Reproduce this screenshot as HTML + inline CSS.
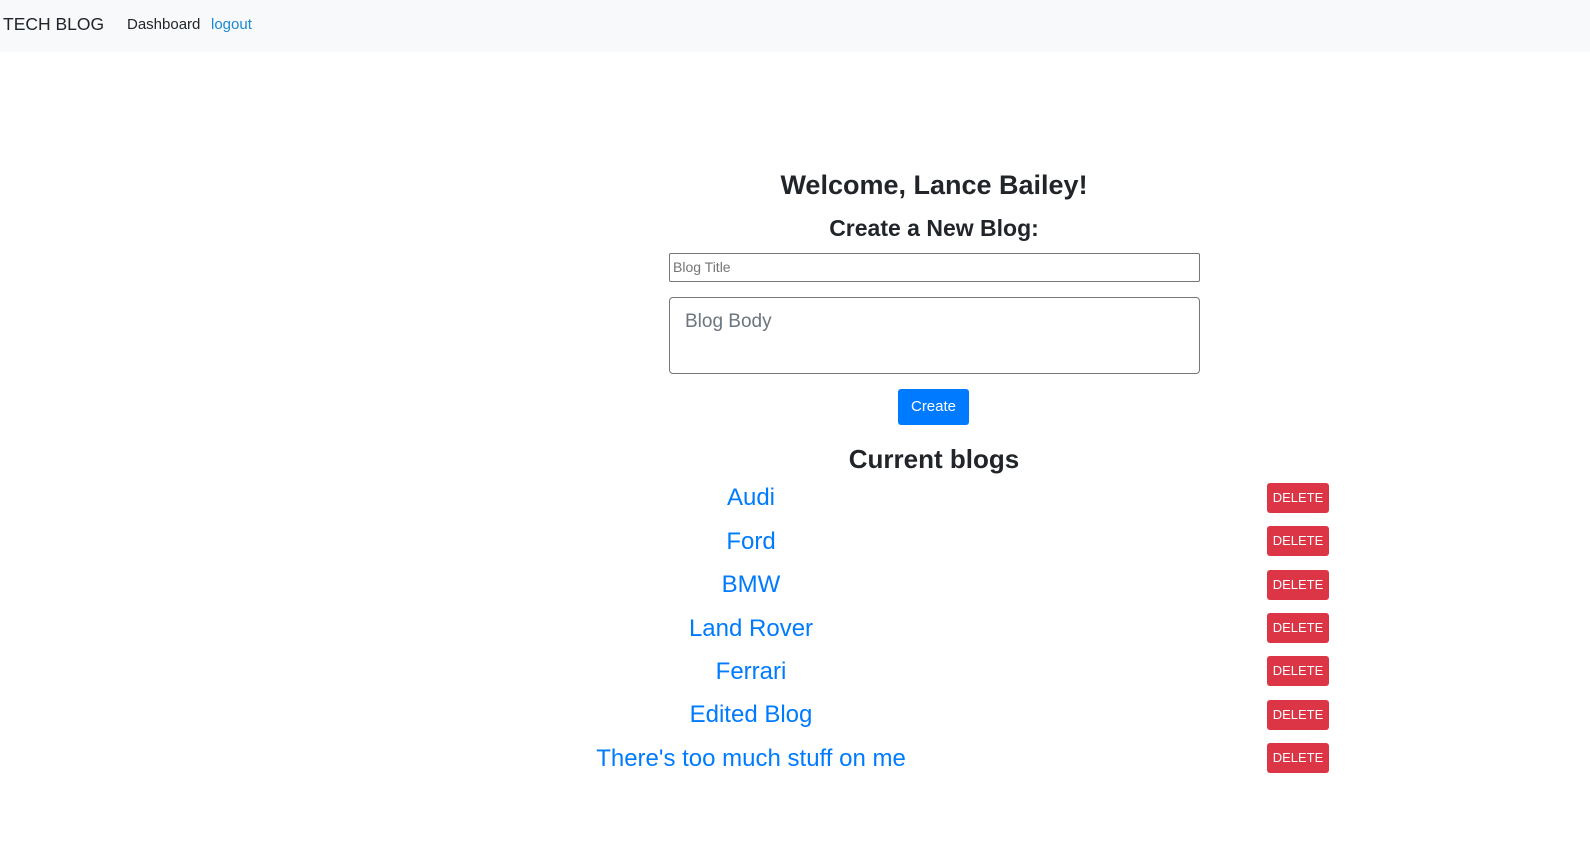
<!DOCTYPE html>
<html><head><style>
body{margin:0;width:1590px;height:868px;background:#fff;font-family:"Liberation Sans",sans-serif;color:#212529;position:relative;overflow:hidden}
.nav{position:absolute;left:0;top:0;width:1590px;height:52px;background:#f8f9fa}
.a{position:absolute;white-space:nowrap}
.c{position:absolute;transform:translateX(-50%);white-space:nowrap}
.link{color:#007bff;font-size:24px}
.del{position:absolute;left:1267px;width:62px;height:30px;background:#dc3545;color:#fff;font-size:13px;border-radius:3px;text-align:center;line-height:30px}
</style></head><body>
<div class="nav"></div>
<div class="a" style="left:3px;top:14px;font-size:17.5px">TECH BLOG</div>
<div class="a" style="left:127px;top:16px;font-size:15px">Dashboard</div>
<div class="a" style="left:211px;top:16px;font-size:15px;color:#1a8ad4">logout</div>
<div class="c" style="left:934px;top:170px;font-size:27px;font-weight:bold">Welcome, Lance Bailey!</div>
<div class="c" style="left:934px;top:215px;font-size:23px;font-weight:bold">Create a New Blog:</div>
<div class="a" style="left:669px;top:253px;width:529px;height:27px;border:1px solid #767676;border-radius:2px;font-size:14px;color:#757575;line-height:27px;text-indent:3px">Blog Title</div>
<div class="a" style="left:669px;top:297px;width:529px;height:75px;border:1px solid #767676;border-radius:4px;font-size:19px;color:#6c757d"><span style="position:absolute;left:15px;top:13px">Blog Body</span></div>
<div class="a" style="left:898px;top:389px;width:71px;height:36px;background:#007bff;border-radius:3px;color:#fff;font-size:15px;text-align:center;line-height:36px">Create</div>
<div class="c" style="left:934px;top:444px;font-size:26px;font-weight:bold">Current blogs</div>
<div class="c link" style="left:751px;top:484px">Audi</div><div class="del" style="top:483px">DELETE</div>
<div class="c link" style="left:751px;top:528px">Ford</div><div class="del" style="top:526px">DELETE</div>
<div class="c link" style="left:751px;top:571px">BMW</div><div class="del" style="top:570px">DELETE</div>
<div class="c link" style="left:751px;top:615px">Land Rover</div><div class="del" style="top:613px">DELETE</div>
<div class="c link" style="left:751px;top:658px">Ferrari</div><div class="del" style="top:656px">DELETE</div>
<div class="c link" style="left:751px;top:701px">Edited Blog</div><div class="del" style="top:700px">DELETE</div>
<div class="c link" style="left:751px;top:745px">There's too much stuff on me</div><div class="del" style="top:743px">DELETE</div>
</body></html>
